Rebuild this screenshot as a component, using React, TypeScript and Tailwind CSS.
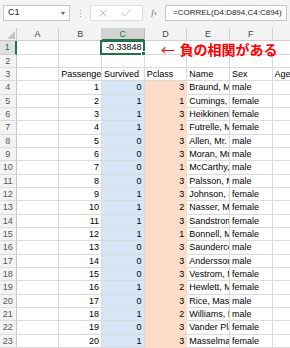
import React from "react";

const data: [number, number, number, string, string][] = [
  [1, 0, 3, "Braund, Mr. Owen Harris", "male"],
  [2, 1, 1, "Cumings, Mrs. John Bradley", "female"],
  [3, 1, 3, "Heikkinen, Miss. Laina", "female"],
  [4, 1, 1, "Futrelle, Mrs. Jacques Heath", "female"],
  [5, 0, 3, "Allen, Mr. William Henry", "male"],
  [6, 0, 3, "Moran, Mr. James", "male"],
  [7, 0, 1, "McCarthy, Mr. Timothy J", "male"],
  [8, 0, 3, "Palsson, Master. Gosta Leonard", "male"],
  [9, 1, 3, "Johnson, Mrs. Oscar W", "female"],
  [10, 1, 2, "Nasser, Mrs. Nicholas", "female"],
  [11, 1, 3, "Sandstrom, Miss. Marguerite", "female"],
  [12, 1, 1, "Bonnell, Miss. Elizabeth", "female"],
  [13, 0, 3, "Saundercock, Mr. William Henry", "male"],
  [14, 0, 3, "Andersson, Mr. Anders Johan", "male"],
  [15, 0, 3, "Vestrom, Miss. Hulda", "female"],
  [16, 1, 2, "Hewlett, Mrs. Mary D", "female"],
  [17, 0, 3, "Rice, Master. Eugene", "male"],
  [18, 1, 2, "Williams, Mr. Charles Eugene", "male"],
  [19, 0, 3, "Vander Planke, Mrs. Julius", "female"],
  [20, 1, 3, "Masselman, Miss. Saijeh", "female"],
];

const cellBase =
  "w-[42.67px] h-[13.33px] shrink-0 border-r border-b border-[#dadada] overflow-hidden whitespace-nowrap px-[2px] leading-[13px] text-[9px] text-black";

function RowHeader({ n, selected = false }: { n: number; selected?: boolean }) {
  return (
    <div
      className={
        selected
          ? "w-[16.67px] h-[13.33px] shrink-0 bg-[#e1e1e1] border-b border-[#cfcfcf] border-r-2 border-r-[#217346] text-[9px] leading-[13px] text-center text-[#217346]"
          : "w-[16.67px] h-[13.33px] shrink-0 bg-[#f3f3f3] border-b border-[#dcdcdc] border-r border-r-[#c8c8c8] text-[9px] leading-[13px] text-center text-[#555]"
      }
    >
      {n}
    </div>
  );
}

export default function App() {
  return (
    <div className="w-[290px] h-[348px] overflow-hidden bg-white font-['Liberation_Sans',Arial,sans-serif]">
      {/* toolbar */}
      <div className="h-[28px] bg-[#f4f4f4] flex items-start pt-[5px]">
        <div className="ml-[3px] w-[67px] h-[16px] bg-white border border-[#c6c6c6] flex items-center justify-between pl-[4px] pr-[4px]">
          <span className="text-[9px] text-[#222]">C1</span>
          <span className="w-0 h-0 border-l-[2.5px] border-r-[2.5px] border-t-[3px] border-l-transparent border-r-transparent border-t-[#666]" />
        </div>
        <div className="ml-[9px] w-[3px] h-[16px] flex flex-col items-center justify-center gap-[2px]">
          <span className="w-[1px] h-[1px] bg-[#aaa]" />
          <span className="w-[1px] h-[1px] bg-[#aaa]" />
          <span className="w-[1px] h-[1px] bg-[#aaa]" />
        </div>
        <div className="ml-[8px] w-[53px] h-[16px] bg-white border border-[#dedede] flex items-center">
          <svg width="8" height="8" viewBox="0 0 8 8" className="ml-[8px]">
            <path d="M0.5 0.5 L7.5 7.5 M7.5 0.5 L0.5 7.5" stroke="#b5b5b5" strokeWidth="0.9" fill="none" />
          </svg>
          <svg width="10" height="8" viewBox="0 0 10 8" className="ml-[14px]">
            <path d="M0.5 4 L3.5 7 L9.5 0.8" stroke="#b5b5b5" strokeWidth="0.9" fill="none" />
          </svg>
        </div>
        <div className="w-[22px] h-[16px] flex items-center justify-center">
          <span className="text-[9px] italic text-[#777] font-['Liberation_Serif',serif]">
            f<span className="text-[7px]">x</span>
          </span>
        </div>
        <div className="w-[122px] h-[16px] bg-white border border-[#c6c6c6] flex items-center pl-[7px]">
          <span className="text-[8px] text-[#222] whitespace-nowrap">=CORREL(D4:D894,C4:C894)</span>
        </div>
      </div>

      {/* column headers */}
      <div className="flex h-[13.33px]">
        <div className="w-[16.67px] h-[13.33px] shrink-0 bg-[#f3f3f3] border-r border-b border-[#c8c8c8] relative">
          <svg width="8" height="8" viewBox="0 0 8 8" className="absolute right-[1px] bottom-[1px]">
            <path d="M8 0 L8 8 L0 8 Z" fill="#c3c3c3" />
          </svg>
        </div>
        {["A", "B", "C", "D", "E", "F", "G"].map((c) =>
          c === "C" ? (
            <div
              key={c}
              className="w-[42.67px] h-[13.33px] shrink-0 bg-[#d3d3d3] border-r border-[#c0c0c0] border-b-2 border-b-[#217346] text-[9px] leading-[12px] text-center text-[#217346]"
            >
              {c}
            </div>
          ) : (
            <div
              key={c}
              className="w-[42.67px] h-[13.33px] shrink-0 bg-[#f3f3f3] border-r border-b border-[#d0d0d0] text-[9px] leading-[12px] text-center text-[#444]"
            >
              {c}
            </div>
          )
        )}
      </div>

      {/* row 1 */}
      <div className="flex">
        <RowHeader n={1} selected />
        <div className={cellBase}></div>
        <div className={cellBase}></div>
        <div className={cellBase + " relative overflow-visible text-right"}>
          -0.33848
          <div className="absolute left-[-1.5px] top-[-1.5px] right-[-1px] bottom-[-1px] border-2 border-[#217346] pointer-events-none">
            <div className="absolute right-[-3.5px] bottom-[-3.5px] w-[5px] h-[5px] bg-[#217346] border border-white" />
          </div>
        </div>
        <div className="w-[42.67px] h-[13.33px] shrink-0 border-r border-b border-[#dadada] relative z-10 overflow-visible whitespace-nowrap">
          <div className="absolute left-[16px] top-[0px] flex items-center h-[16px] font-['Noto_Sans_CJK_JP',sans-serif] text-[14px] leading-none text-[#ff0000]">
            <span className="font-normal">←</span>
            <span className="ml-[5px] font-bold">負の相関がある</span>
          </div>
        </div>
        <div className="w-[42.67px] h-[13.33px] shrink-0 border-b border-[#dadada]"></div>
        <div className="w-[42.67px] h-[13.33px] shrink-0 border-b border-[#dadada]"></div>
        <div className={cellBase}></div>
      </div>

      {/* row 2 */}
      <div className="flex">
        <RowHeader n={2} />
        {[0, 1, 2, 3, 4, 5, 6].map((i) => (
          <div key={i} className={cellBase}></div>
        ))}
      </div>

      {/* row 3 */}
      <div className="flex">
        <RowHeader n={3} />
        <div className={cellBase}></div>
        <div className={cellBase}>Passenger</div>
        <div className={cellBase}>Survived</div>
        <div className={cellBase}>Pclass</div>
        <div className={cellBase}>Name</div>
        <div className={cellBase}>Sex</div>
        <div className={cellBase}>Age</div>
      </div>

      {data.map((r, i) => (
        <div key={i} className="flex">
          <RowHeader n={i + 4} />
          <div className={cellBase}></div>
          <div className={cellBase + " text-right"}>{r[0]}</div>
          <div className={cellBase + " text-right bg-[#d6e6f6] border-[#d6e6f6]"}>{r[1]}</div>
          <div className={cellBase + " text-right bg-[#fbdcc8] border-[#fbdcc8]"}>{r[2]}</div>
          <div className={cellBase}>{r[3]}</div>
          <div className={cellBase}>{r[4]}</div>
          <div className={cellBase}></div>
        </div>
      ))}
    </div>
  );
}
